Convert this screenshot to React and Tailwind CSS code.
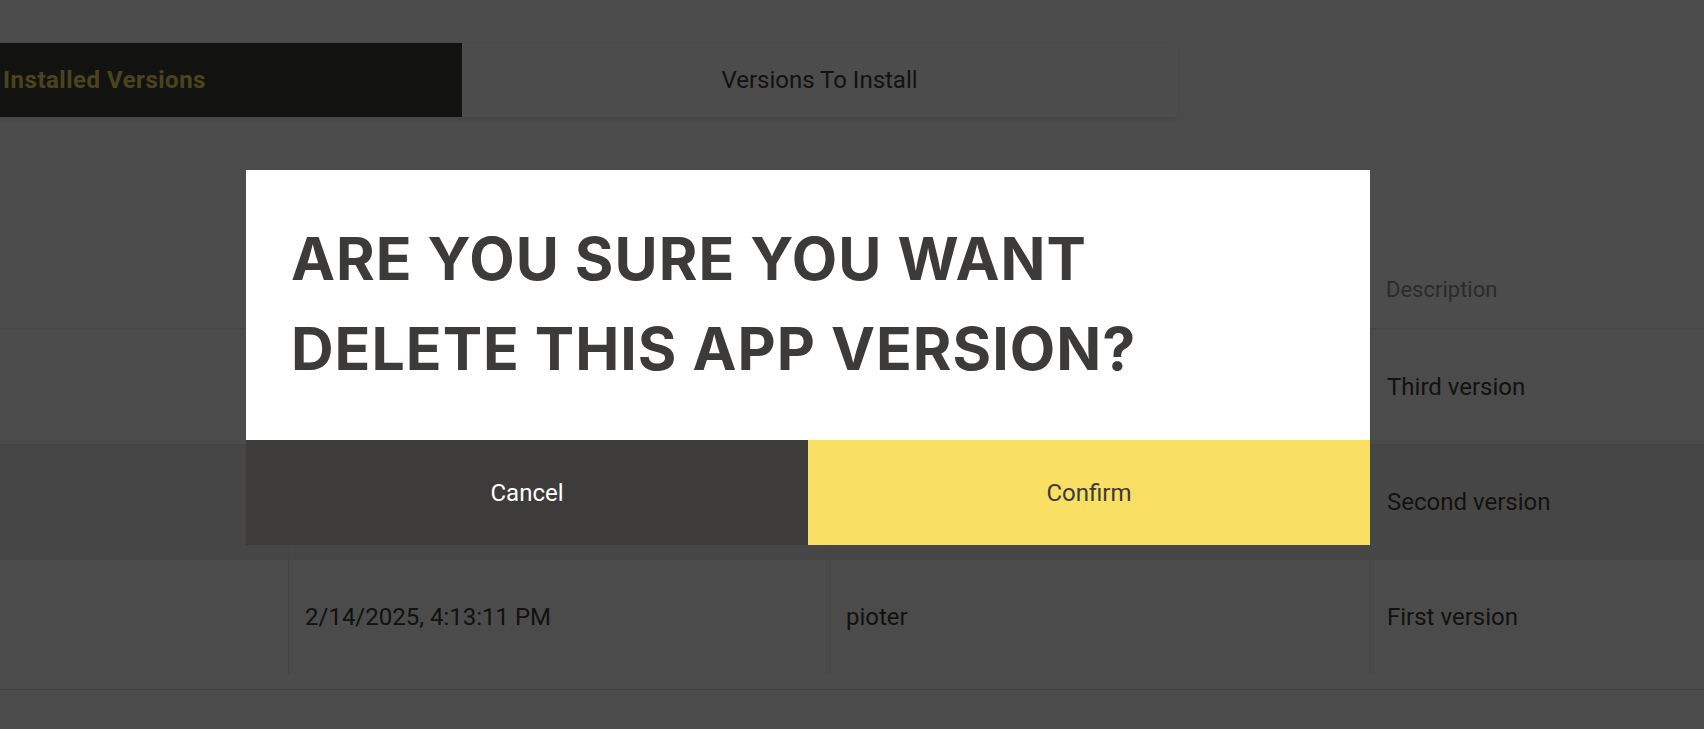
import React from "react";

const rows = [
  { date: "", user: "", desc: "Third version", bg: "bg-[#fafafa]" },
  { date: "", user: "", desc: "Second version", bg: "bg-[#ececec]" },
  { date: "2/14/2025, 4:13:11 PM", user: "pioter", desc: "First version", bg: "bg-[#fafafa]" },
];

export default function App() {
  return (
    <div className="relative w-[1704px] h-[729px] overflow-hidden bg-white font-[Roboto,sans-serif] text-[#3e3c3a]">
      {/* page */}
      <div className="pt-[43px] ml-[-253px] w-[2164px]">
        <div className="flex w-[1430px] shadow-[0_2px_6px_rgba(0,0,0,0.12)]">
          <div className="w-[715px] h-[74px] flex items-center justify-center bg-[#3e3c3a] text-[#f9e064] text-[24px] font-bold tracking-[0.5px]">
            Installed Versions
          </div>
          <div className="w-[715px] h-[74px] flex items-center justify-center bg-white text-[#3e3c3a] text-[24px]">
            Versions To Install
          </div>
        </div>

        <div className="mt-[134px]">
          <div className="grid grid-cols-[541px_541px_541px_541px] h-[78px] items-center border-b border-[#e8e8e8] shadow-[0_2px_3px_rgba(0,0,0,0.04)] text-[22px] text-[#909090]">
            <div className="px-4"></div>
            <div className="px-4"></div>
            <div className="px-4"></div>
            <div className="px-4">Description</div>
          </div>
          {rows.map((r, i) => (
            <div
              key={i}
              className={`grid grid-cols-[541px_541px_541px_541px] h-[115px] text-[24px] ${r.bg} ${i > 0 ? "border-t border-[#e4e4e4]" : ""}`}
            >
              <div className="px-4 flex items-center"></div>
              <div className="px-4 flex items-center border-l border-[#e4e4e4]">{r.date}</div>
              <div className="px-4 flex items-center border-l border-[#e4e4e4]">{r.user}</div>
              <div className="px-4 flex items-center border-l border-[#e4e4e4]">{r.desc}</div>
            </div>
          ))}
          <div className="mt-[15px] border-t border-[#dedede] h-[40px]"></div>
        </div>
      </div>

      {/* overlay */}
      <div className="absolute inset-0 bg-black/70"></div>

      {/* modal */}
      <div className="absolute left-[246px] top-[170px] w-[1124px] bg-white">
        <div className="pt-[44px] pb-[46px] px-[45px]">
          <h2 className="text-[59px] leading-[90px] font-bold tracking-[1px] text-[#3d3b39] uppercase font-[Inter,sans-serif]">
            Are you sure you want
            <br />
            delete this app version?
          </h2>
        </div>
        <div className="grid grid-cols-2 h-[105px] text-[24px]">
          <button className="bg-[#3e3c3a] text-white flex items-center justify-center">Cancel</button>
          <button className="bg-[#f9e064] text-[#3d3b39] flex items-center justify-center">Confirm</button>
        </div>
      </div>
    </div>
  );
}
